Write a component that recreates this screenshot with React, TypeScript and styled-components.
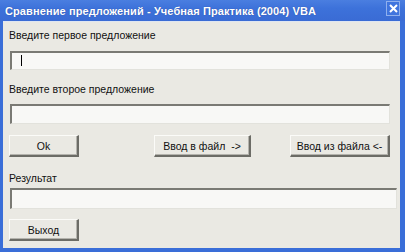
import React from "react";
import styled, { createGlobalStyle } from "styled-components";

const Global = createGlobalStyle`
  html, body { margin: 0; padding: 0; background: #3a6ed8; }
  body { width: 405px; height: 252px; overflow: hidden; }
`;

const Window = styled.div`
  width: 405px;
  height: 252px;
  box-sizing: border-box;
  background: #3a6ed8;
  display: flex;
  flex-direction: column;
  padding: 0 5px 4px 3px;
  font-family: "Liberation Sans", Arial, sans-serif;
`;

const TitleBar = styled.div`
  height: 21px;
  display: flex;
  align-items: flex-start;
  justify-content: space-between;
  margin-left: -3px;
  margin-right: -5px;
  padding: 0 5px 0 5px;
  background: linear-gradient(#4a7ee0, #3d72da 40%, #3a6bd4);
`;

const Title = styled.div`
  color: #ffffff;
  font-weight: bold;
  font-size: 11px;
  line-height: 13px;
  padding-top: 5px;
  letter-spacing: 0.1px;
  text-shadow: 0 0 1px rgba(0,0,60,0.4);
`;

const CloseButton = styled.div`
  width: 14px;
  height: 15px;
  margin-top: 1px;
  box-sizing: border-box;
  border: 1px solid #8fb0ee;
  background: #3f74de;
  display: flex;
  align-items: center;
  justify-content: center;
`;

const Client = styled.div`
  flex: 1;
  background: #eae9e3;
  border-top: 1px solid #dfe6f2;
  padding: 7px 0 0 6px;
  display: flex;
  flex-direction: column;
  align-items: flex-start;
  font-size: 10.5px;
  color: #000;
`;

const Label = styled.div<{ $mt: number }>`
  margin-top: ${(p) => p.$mt}px;
  height: 13px;
  line-height: 13px;
  color: #111;
`;

const TextBox = styled.div<{ $mt: number; $w: number; $h: number }>`
  margin-top: ${(p) => p.$mt}px;
  margin-left: 1px;
  width: ${(p) => p.$w}px;
  height: ${(p) => p.$h}px;
  box-sizing: border-box;
  background: #f8f8f6;
  border-top: 2px solid #7a7a74;
  border-left: 2px solid #7a7a74;
  border-bottom: 1px solid #e2e2dc;
  border-right: 1px solid #e2e2dc;
  position: relative;
`;

const Caret = styled.div`
  position: absolute;
  left: 9px;
  top: 2px;
  width: 1px;
  height: 11px;
  background: #000;
`;

const ButtonRow = styled.div`
  margin-top: 11px;
  display: flex;
  align-items: flex-start;
`;

const Button = styled.div<{ $w: number; $ml?: number; $mt?: number }>`
  width: ${(p) => p.$w}px;
  height: 22px;
  margin-left: ${(p) => p.$ml ?? 0}px;
  margin-top: ${(p) => p.$mt ?? 0}px;
  box-sizing: border-box;
  background: #eae9e3;
  border-top: 1px solid #fbfbf8;
  border-left: 1px solid #fbfbf8;
  border-right: 2px solid #6c6c66;
  border-bottom: 2px solid #6c6c66;
  box-shadow: inset -1px -1px 0 #b4b3ad;
  display: flex;
  align-items: center;
  justify-content: center;
  font-size: 10.5px;
  color: #111;
  white-space: pre;
`;

export default function App() {
  return (
    <>
      <Global />
      <Window>
        <TitleBar>
          <Title>Сравнение предложений - Учебная Практика (2004) VBA</Title>
          <CloseButton>
            <svg width="9" height="9" viewBox="0 0 9 9">
              <path d="M1 1 L8 8 M8 1 L1 8" stroke="#ffffff" strokeWidth="2" />
            </svg>
          </CloseButton>
        </TitleBar>
        <Client>
          <Label $mt={0}>Введите первое предложение</Label>
          <TextBox $mt={9} $w={380} $h={19}>
            <Caret />
          </TextBox>
          <Label $mt={13}>Введите второе предложение</Label>
          <TextBox $mt={8} $w={380} $h={20} />
          <ButtonRow>
            <Button $w={70}>Ok</Button>
            <Button $w={97} $ml={75}>{"Ввод в файл  ->"}</Button>
            <Button $w={100} $ml={39}>{"Ввод из файла <-"}</Button>
          </ButtonRow>
          <Label $mt={15}>Результат</Label>
          <TextBox $mt={3} $w={387} $h={21} />
          <Button $w={70} $mt={10}>Выход</Button>
        </Client>
      </Window>
    </>
  );
}
